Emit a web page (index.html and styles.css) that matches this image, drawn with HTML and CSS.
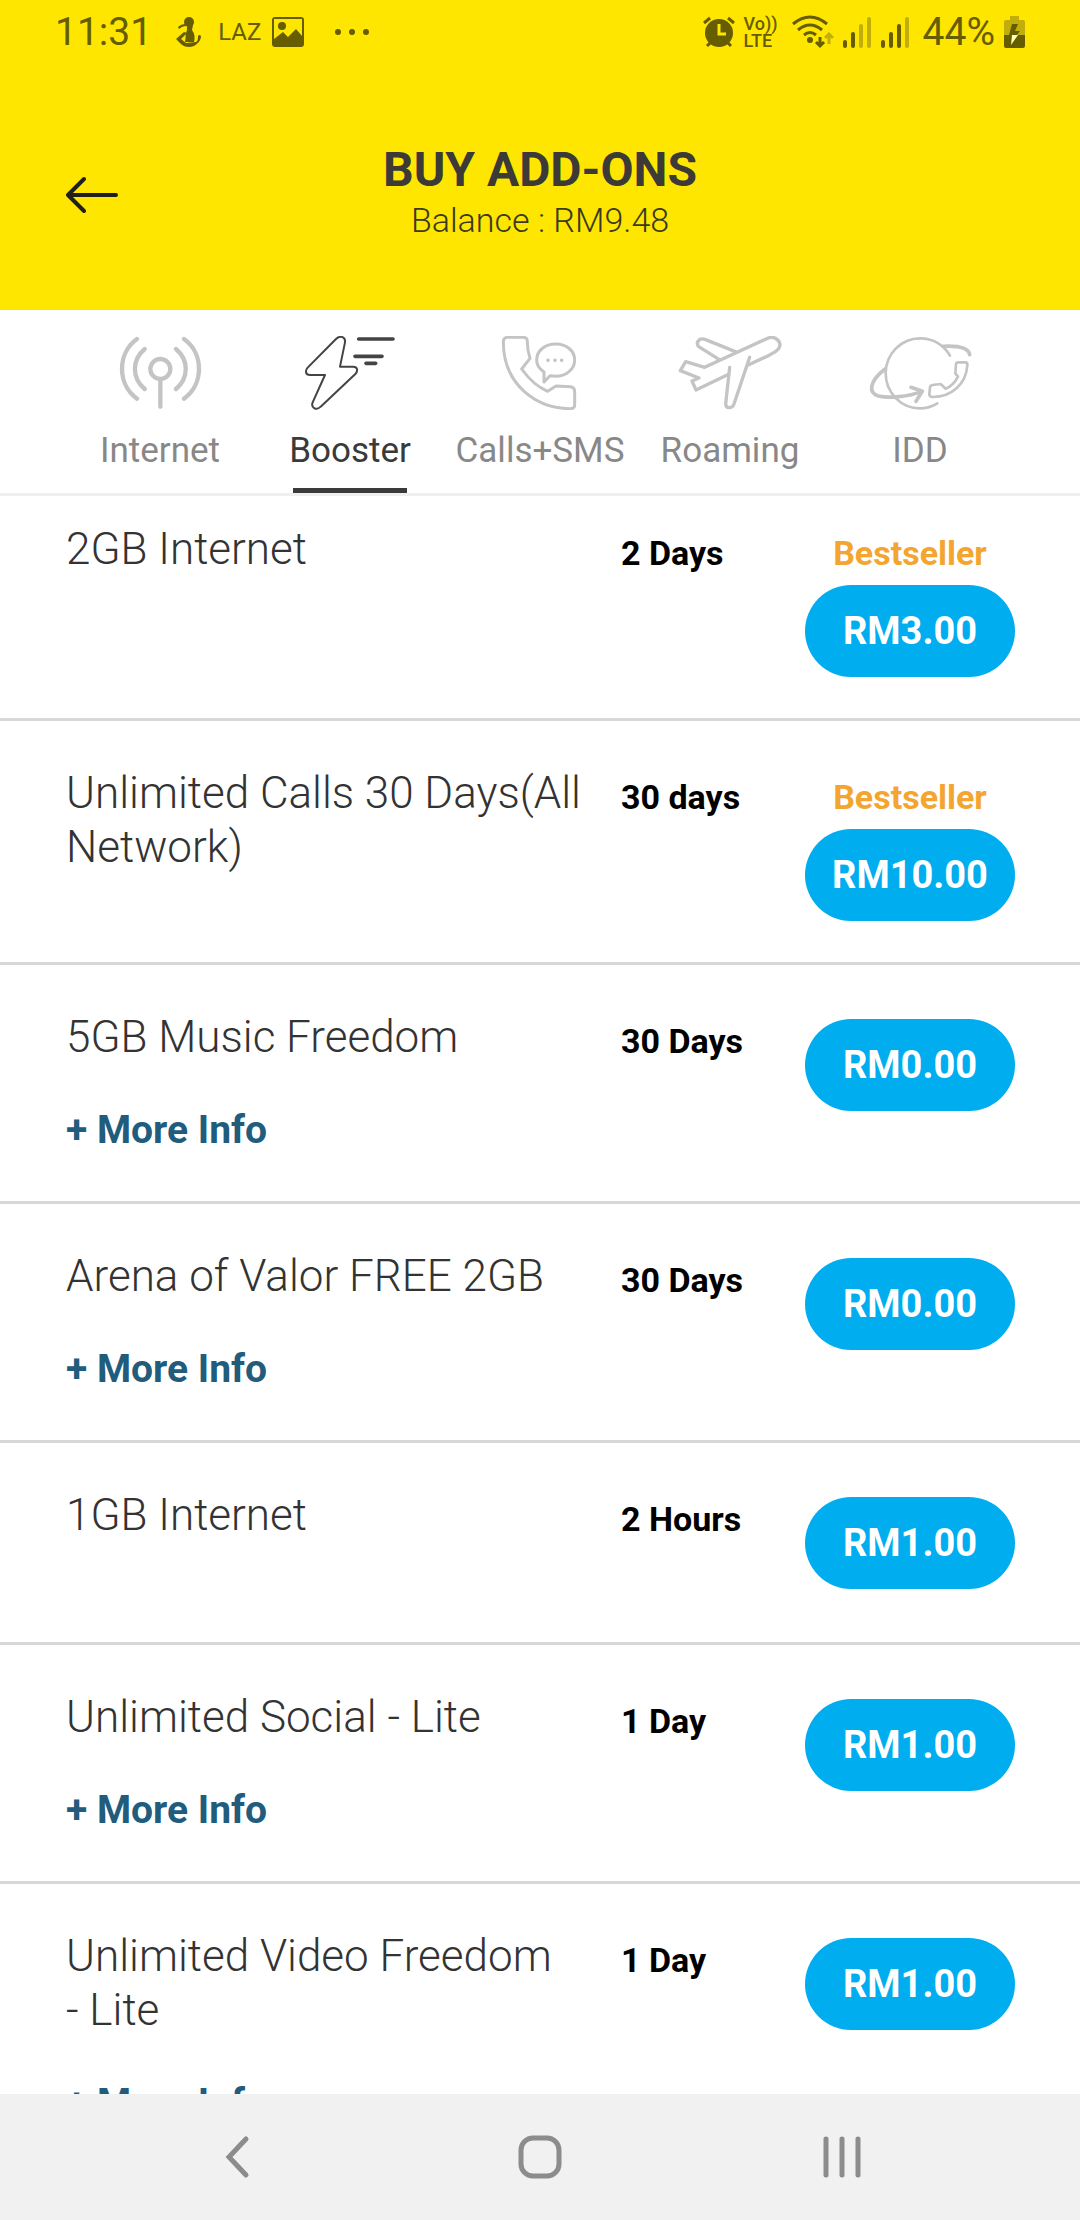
FILE: index.html
```
<!DOCTYPE html>
<html lang="en">
<head>
    <meta charset="UTF-8">
    <meta name="viewport" content="width=device-width, initial-scale=1.0">
    <title>Buy Add-Ons</title>
    <link rel="stylesheet" href="styles.css">
</head>
<body>
    <div class="app">
        <header class="header">
            <div class="status-bar">
                <div class="status-left">
                    <span class="clock">11:31</span>
                    <svg class="icon-person" width="28" height="32" viewBox="0 0 28 32">
                        <circle cx="15" cy="6" r="5"/>
                        <path d="M13 9h6l-1 5c3 4 3 8 2 12h-9c1-4 0-7 2-12z"/>
                        <path d="M2 23l8-7 3 1-6 6 5 4 10-1c2-1 2-4 2-6 1-2 3-1 3 1-1 5-4 7-7 9-5 2-10 1-13-2z"/>
                        <path d="M4 11q3-3 7-3l1 2q-4 0-7 3z"/>
                    </svg>
                    <span class="brand">LAZ</span>
                    <svg class="icon-image" width="32" height="30" viewBox="0 0 32 30">
                        <path fill-rule="evenodd" d="M3 0h26q3 0 3 3v24q0 3-3 3H3q-3 0-3-3V3q0-3 3-3zM2 2v20l9-7 5 5 8-8 6 7V2z"/>
                        <circle cx="10" cy="9" r="4"/>
                    </svg>
                    <svg class="icon-dots" width="36" height="8" viewBox="0 0 36 8">
                        <circle cx="4" cy="4" r="3"/>
                        <circle cx="18" cy="4" r="3"/>
                        <circle cx="32" cy="4" r="3"/>
                    </svg>
                </div>
                <div class="status-right">
                    <svg width="34" height="32" viewBox="0 0 34 32">
                        <circle cx="17" cy="17" r="14"/>
                        <path class="line" d="M2 7l6-5M32 7l-6-5M5 30l4-4M29 30l-4-4"/>
                        <path class="cutout" d="M17 8v10h7"/>
                    </svg>
                    <span class="volte"><span>Vo))</span><span>LTE</span></span>
                    <svg class="icon-wifi" width="42" height="34" viewBox="0 0 42 34">
                        <path class="line" d="M1 9q17-14 34 0M6 15q12-10 24 0M12 20q6-5 12 0"/>
                        <circle cx="18" cy="25" r="3"/>
                        <path class="line" d="M28 22v9M24 27l4 4 4-4"/>
                        <path class="line faint" d="M37 29V19M33 23l4-4 4 4"/>
                    </svg>
                    <svg class="icon-signal" width="30" height="32" viewBox="0 0 30 32">
                        <path class="bar" d="M3 26v4M11 18v12"/>
                        <path class="bar faint" d="M19 10v20M27 3v27"/>
                    </svg>
                    <svg class="icon-signal" width="30" height="32" viewBox="0 0 30 32">
                        <path class="bar" d="M3 26v4M11 18v12M19 10v20"/>
                        <path class="bar faint" d="M27 3v27"/>
                    </svg>
                    <span class="percent">44%</span>
                    <svg width="21" height="34" viewBox="0 0 21 34">
                        <path fill="#c2ae0a" d="M6 1h9v4h4q2 0 2 2v14H0V7q0-2 2-2h4z"/>
                        <path d="M0 20h21v11q0 2-2 2H2q-2 0-2-2z"/>
                        <path d="M8 9h6l-3 7h5l-3 4H5z"/>
                        <path fill="#ffffb0" d="M8 20h6L7 30z"/>
                    </svg>
                </div>
            </div>
            <div class="title-bar">
                <button class="back" aria-label="Back">
                    <svg width="52" height="44" viewBox="0 0 52 44">
                        <path d="M50 26H2M18 10L2 26l16 16"/>
                    </svg>
                </button>
                <div class="heading">
                    <h1>BUY ADD-ONS</h1>
                    <p>Balance : RM9.48</p>
                </div>
            </div>
        </header>

        <nav class="tabs">
            <button class="tab">
                <svg viewBox="81 78 324 222" stroke-width="13">
                    <circle cx="244" cy="177" r="30"/>
                    <path d="M244 208v82M197 117c-39 33-39 87 0 120M291 117c39 33 39 87 0 120M174 87c-60 43-60 136 0 179M315 87c60 43 60 136 0 179"/>
                </svg>
                <span>Internet</span>
            </button>
            <button class="tab active">
                <svg viewBox="648 78 324 222" stroke-width="6">
                    <path d="M768 87C782 74 797 82 795 97L780 170h40c12 0 15 12 6 22L722 290c-14 14-30 2-24-13l37-82h-45c-14 0-15-13-7-22z"/>
                    <path stroke-width="11" d="M836 87h103M825 139h81M858 160h29"/>
                </svg>
                <span>Booster</span>
            </button>
            <button class="tab">
                <svg viewBox="138 78 324 222" stroke-width="9">
                    <path d="M202 82h48q12 0 12 13 0 25 8 50l-25 32c20 28 45 53 78 67l25-16 44 2q12 2 12 15v39q0 12-14 12C290 296 190 225 190 96q0-13 12-14z"/>
                    <path d="M312 186c-17-11-22-24-22-36 0-28 25-48 57-48s57 20 57 48-26 49-57 49l-17-2-18 19z"/>
                    <path stroke-width="11" d="M324 151h0M345 151h0M365 151h0"/>
                </svg>
                <span>Calls+SMS</span>
            </button>
            <button class="tab">
                <svg viewBox="708 78 324 222" stroke-width="10">
                    <path d="M866 193l-98 47-12-27 21-9-56-22 16-27 57 17L980 86c25-12 45 9 38 26-4 12-18 18-33 25l-62 29"/>
                    <path d="M838 149l-63-40q-7-11 3-20 6-4 17-1l91 37M869 172l-12 110q0 11 11 11 10 0 14-11l47-140"/>
                </svg>
                <span>Roaming</span>
            </button>
            <button class="tab">
                <svg viewBox="198 78 324 222" stroke-width="8">
                    <path d="M450 137C432 106 400 85 360 85c-57 0-103 47-103 105s46 105 103 105q28 0 52-15"/>
                    <path d="M474 157h22q7 0 6 9c-4 56-47 96-106 95q-8-1-8-9l2-20q1-6 8-7l24-3 15 14c15-6 29-20 37-36l-8-10 2-28q1-5 6-5z"/>
                    <path stroke-width="11" d="M430 109c40-2 75 3 79 25M255 177c-46 36-52 71-20 81 32 8 90 2 131-14M333 232l34 12-19 30"/>
                </svg>
                <span>IDD</span>
            </button>
        </nav>

        <main class="content">
            <ul class="addons">
                <li class="addon">
                    <div class="info"><h2>2GB Internet</h2></div>
                    <p class="validity">2 Days</p>
                    <div class="price">
                        <p class="badge">Bestseller</p>
                        <button class="buy">RM3.00</button>
                    </div>
                </li>
                <li class="addon">
                    <div class="info"><h2>Unlimited Calls 30 Days(All Network)</h2></div>
                    <p class="validity">30 days</p>
                    <div class="price">
                        <p class="badge">Bestseller</p>
                        <button class="buy">RM10.00</button>
                    </div>
                </li>
                <li class="addon">
                    <div class="info">
                        <h2>5GB Music Freedom</h2>
                        <a class="more" href="#">+ More Info</a>
                    </div>
                    <p class="validity">30 Days</p>
                    <div class="price"><button class="buy">RM0.00</button></div>
                </li>
                <li class="addon">
                    <div class="info">
                        <h2>Arena of Valor FREE 2GB</h2>
                        <a class="more" href="#">+ More Info</a>
                    </div>
                    <p class="validity">30 Days</p>
                    <div class="price"><button class="buy">RM0.00</button></div>
                </li>
                <li class="addon">
                    <div class="info"><h2>1GB Internet</h2></div>
                    <p class="validity">2 Hours</p>
                    <div class="price"><button class="buy">RM1.00</button></div>
                </li>
                <li class="addon">
                    <div class="info">
                        <h2>Unlimited Social <span class="plan">- Lite</span></h2>
                        <a class="more" href="#">+ More Info</a>
                    </div>
                    <p class="validity">1 Day</p>
                    <div class="price"><button class="buy">RM1.00</button></div>
                </li>
                <li class="addon">
                    <div class="info">
                        <h2>Unlimited Video Freedom <span class="plan">- Lite</span></h2>
                        <a class="more" href="#">+ More Info</a>
                    </div>
                    <p class="validity">1 Day</p>
                    <div class="price"><button class="buy">RM1.00</button></div>
                </li>
            </ul>
        </main>

        <footer class="nav-bar">
            <button aria-label="Back">
                <svg width="44" height="44" viewBox="0 0 44 44"><path d="M30 4L13 22l17 18"/></svg>
            </button>
            <button aria-label="Home">
                <svg width="44" height="44" viewBox="0 0 44 44"><rect x="3" y="3" width="38" height="38" rx="12"/></svg>
            </button>
            <button aria-label="Recent apps">
                <svg width="44" height="44" viewBox="0 0 44 44"><path d="M6 4v36M22 4v36M38 4v36"/></svg>
            </button>
        </footer>
    </div>
</body>
</html>
```
FILE: styles.css
```
/* General Styles */
* {
    box-sizing: border-box;
}

body {
    margin: 0;
    background-color: #fff;
    color: #333;
    font-family: Roboto, "Liberation Sans", sans-serif;
}

h1, h2, p, ul {
    margin: 0;
    padding: 0;
}

button {
    padding: 0;
    border: none;
    background: none;
    font-family: inherit;
    cursor: pointer;
}

svg {
    display: block;
}

.app {
    display: flex;
    flex-direction: column;
    height: 100vh;
}

/* Header */
.header {
    background-color: #ffe600;
}

.status-bar {
    display: flex;
    justify-content: space-between;
    align-items: center;
    height: 64px;
    padding: 0 55px;
    color: #665c00;
    fill: #665c00;
}

.status-left,
.status-right {
    display: flex;
    align-items: center;
}

.clock,
.percent {
    font-size: 39px;
}

.icon-person {
    margin-left: 22px;
}

.brand {
    margin-left: 16px;
    font-size: 24px;
}

.icon-image {
    margin-left: 11px;
}

.icon-dots {
    margin-left: 30px;
}

.volte {
    display: flex;
    flex-direction: column;
    margin-left: 8px;
    font-size: 18px;
    font-weight: 500;
    line-height: 17px;
}

.icon-wifi {
    margin-left: 14px;
}

.icon-signal {
    margin-left: 8px;
}

.percent {
    margin: 0 9px 0 13px;
}

.status-bar .line,
.status-bar .bar,
.status-bar .cutout {
    fill: none;
    stroke: #665c00;
    stroke-width: 3;
}

.status-bar .bar {
    stroke-linecap: round;
    stroke-width: 4;
}

.status-bar .cutout {
    stroke: #ffe600;
}

.status-bar .faint {
    stroke: #c2ae0a;
}

.title-bar {
    display: grid;
    grid-template-columns: 1fr auto 1fr;
    align-items: center;
    padding: 77px 66px 69px;
}

.back {
    justify-self: start;
}

.back svg {
    fill: none;
    stroke: #1f1f1b;
    stroke-width: 4;
    stroke-linecap: round;
    stroke-linejoin: round;
}

.heading {
    text-align: center;
}

.heading h1 {
    color: #3b3a36;
    font-size: 48px;
    font-weight: 700;
    line-height: 58px;
}

.heading p {
    color: #3b3a20;
    font-size: 34px;
    font-weight: 300;
    line-height: 42px;
}

/* Tabs */
.tabs {
    display: grid;
    grid-template-columns: repeat(5, 1fr);
    padding: 26px 65px 0;
    border-bottom: 3px solid #efefef;
}

.tab {
    display: flex;
    flex-direction: column;
    align-items: center;
    color: #888;
    font-size: 35px;
    line-height: 42px;
}

.tab svg {
    width: 108px;
    height: 74px;
    margin-bottom: 20px;
    fill: none;
    stroke: #c4c4c4;
    stroke-linecap: round;
    stroke-linejoin: round;
}

.tab::after {
    content: "";
    width: 114px;
    height: 5px;
    margin-top: 16px;
}

.tab.active {
    color: #3a3a3a;
}

.tab.active svg {
    stroke: #444;
}

.tab.active::after {
    background-color: #3a3a3a;
}

/* Add-on list */
.content {
    flex: 1;
    min-height: 0;
    overflow: hidden;
}

.addons {
    list-style: none;
}

.addon {
    display: grid;
    grid-template-columns: 1fr 160px 210px;
    column-gap: 24px;
    align-items: start;
    padding: 45px 65px 41px 66px;
    border-bottom: 3px solid #d8d8d8;
}

.addon:first-child {
    padding-top: 26px;
}

.addon h2 {
    font-size: 44px;
    font-weight: 300;
    line-height: 54px;
}

.plan {
    white-space: nowrap;
}

.more {
    display: inline-block;
    margin: 39px 0 3px;
    color: #215c7c;
    font-size: 39px;
    font-weight: 700;
    line-height: 54px;
    text-decoration: none;
}

.validity,
.badge {
    font-size: 34px;
    font-weight: 700;
    line-height: 63px;
}

.validity {
    color: #000;
}

.badge {
    color: #f3a52f;
    text-align: center;
}

.buy {
    display: block;
    width: 100%;
    height: 92px;
    margin: 9px 0 12px;
    border-radius: 46px;
    background-color: #00adef;
    color: #fff;
    font-size: 38px;
    font-weight: 700;
}

.badge + .buy {
    margin: 0;
}

/* Bottom navigation */
.nav-bar {
    display: flex;
    height: 126px;
    padding: 0 87px;
    background-color: #f1f1f1;
}

.nav-bar button {
    display: flex;
    flex: 1;
    align-items: center;
    justify-content: center;
}

.nav-bar svg {
    fill: none;
    stroke: #8c8c8c;
    stroke-width: 5;
    stroke-linecap: round;
}
```
